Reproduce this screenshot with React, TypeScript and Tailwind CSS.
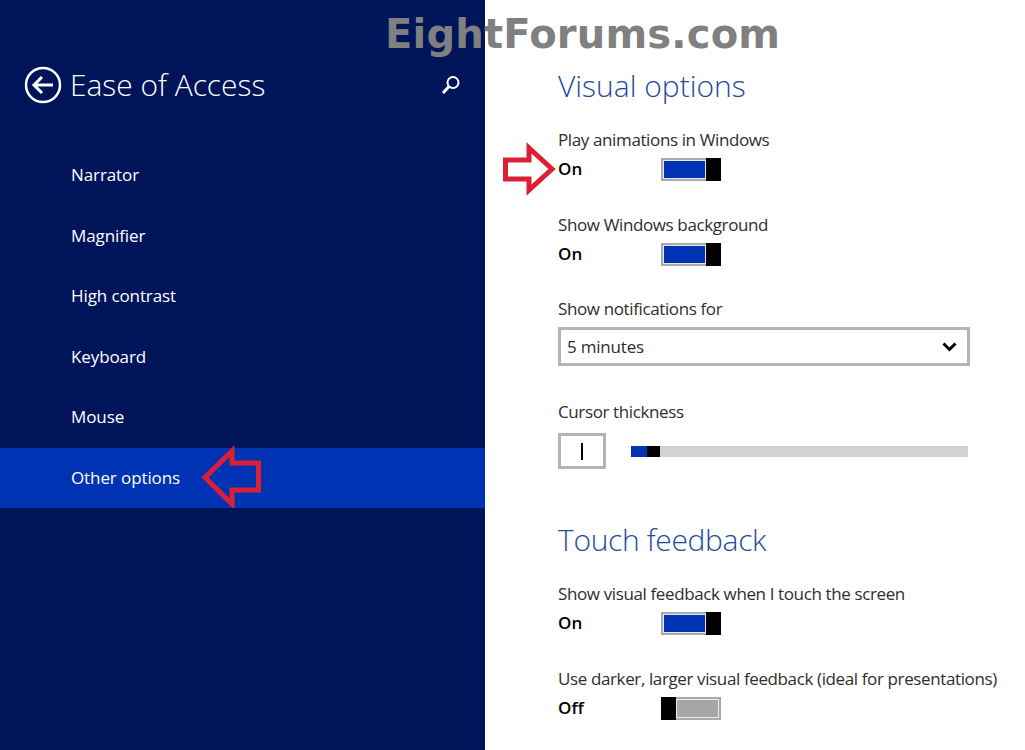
const font = { fontFamily: '"Open Sans", "Noto Sans", sans-serif' };

const navItems = ["Narrator", "Magnifier", "High contrast", "Keyboard", "Mouse", "Other options"];

function Toggle({ on }: { on: boolean }) {
  return (
    <div className="flex h-[23px] w-[60px] items-stretch border-2 border-[#a9a9a9]">
      {on ? (
        <>
          <div className="flex-1 border border-[#e4e8f2] bg-[#0033b4]" />
          <div className="-my-[2px] -mr-[2px] w-[15px] bg-black" />
        </>
      ) : (
        <>
          <div className="-my-[2px] -ml-[2px] w-[15px] bg-black" />
          <div className="flex-1 border border-[#eeeeee] bg-[#a6a6a6]" />
        </>
      )}
    </div>
  );
}

function ToggleRow({ label, on, className }: { label: string; on: boolean; className: string }) {
  return (
    <div className={className}>
      <p className="h-[26px] text-[17px] leading-[26px] tracking-[-0.38px] text-[#2e2e2e]">{label}</p>
      <div className="mt-[4px] flex h-[24px] items-center">
        <span className="w-[103px] text-[17px] font-semibold text-black">{on ? "On" : "Off"}</span>
        <Toggle on={on} />
      </div>
    </div>
  );
}

export default function App() {
  return (
    <div className="relative flex h-[750px] w-[1025px] overflow-hidden bg-white" style={font}>
      {/* Left nav */}
      <aside className="w-[485px] shrink-0 bg-[#00145a] text-white">
        <header className="flex h-[145px] items-center pl-[24px] pr-[24px] pt-[24px]">
          <svg width="38" height="38" viewBox="0 0 38 38" fill="none" stroke="white" strokeWidth="2.5">
            <circle cx="19" cy="19" r="17" />
            <path d="M10 19 H29 M18 11 L10 19 L18 27" strokeWidth="3" />
          </svg>
          <h1 className="ml-[8px] flex-1 text-[29.9px] font-light leading-none">Ease of Access</h1>
          <svg width="20" height="20" viewBox="0 0 20 20" fill="none" stroke="white" strokeWidth="2">
            <circle cx="12" cy="7.5" r="5.5" />
            <path d="M8 11.5 L2 18" strokeWidth="3" />
          </svg>
        </header>
        <nav>
          {navItems.map((item) => (
            <div
              key={item}
              className={`flex h-[60.5px] items-center pb-[1px] pl-[71px] text-[17px] tracking-[-0.1px] ${item === "Other options" ? "bg-[#0033b4]" : ""}`}
            >
              {item}
            </div>
          ))}
        </nav>
      </aside>

      {/* Settings pane */}
      <main className="flex-1 pl-[73px] pt-[65px]">
        <h2 className="h-[42px] text-[30px] font-light leading-[42px] text-[#1f4a9c]">Visual options</h2>
        <ToggleRow label="Play animations in Windows" on className="mt-[20px]" />
        <ToggleRow label="Show Windows background" on className="mt-[31px]" />
        <p className="mt-[30px] h-[26px] text-[17px] leading-[26px] tracking-[-0.38px] text-[#2e2e2e]">Show notifications for</p>
        <div className="mt-[5px] flex h-[39px] w-[412px] items-center justify-between border-[3px] border-[#b4b4b4] pl-[6px] pr-[10px] text-[17px] tracking-[-0.2px] text-[#2e2e2e]">
          <span>5 minutes</span>
          <svg width="15" height="10" viewBox="0 0 15 10" fill="none" stroke="black" strokeWidth="3">
            <path d="M1.5 1.5 L7.5 7.5 L13.5 1.5" />
          </svg>
        </div>
        <p className="mt-[33px] h-[26px] text-[17px] leading-[26px] tracking-[-0.38px] text-[#2e2e2e]">Cursor thickness</p>
        <div className="mt-[8px] flex items-center">
          <div className="flex h-[36px] w-[48px] items-center justify-center border-[3px] border-[#b4b4b4]">
            <div className="h-[17px] w-[2px] bg-black" />
          </div>
          <div className="ml-[25px] flex h-[11px] w-[337px] bg-[#d2d2d2]">
            <div className="w-[16px] bg-[#0033b4]" />
            <div className="w-[13px] bg-black" />
          </div>
        </div>
        <h2 className="mt-[50px] h-[42px] text-[30px] font-light leading-[42px] tracking-[-0.35px] text-[#1f4a9c]">Touch feedback</h2>
        <ToggleRow label="Show visual feedback when I touch the screen" on className="mt-[20px]" />
        <ToggleRow label="Use darker, larger visual feedback (ideal for presentations)" on={false} className="mt-[31px]" />
      </main>

      {/* Overlays: watermark and callout arrows */}
      <div
        className="absolute left-[385px] top-[9px] text-[40px] font-bold leading-[50px] tracking-[0.2px] text-[#808080]"
        style={{ fontFamily: '"DejaVu Sans", sans-serif' }}
      >
        EightForums.com
      </div>
      <svg className="absolute left-[499px] top-[139px]" width="62" height="62" viewBox="0 0 62 62" fill="none">
        <path d="M53 30 L30 9 L30 21 L6.5 21 L6.5 40 L30 40 L30 51 Z" stroke="#dc2033" strokeWidth="5" />
      </svg>
      <svg className="absolute left-[200px] top-[446px]" width="62" height="62" viewBox="0 0 62 62" fill="none">
        <path d="M5 31.5 L32 5 L32 17 L58.5 17 L58.5 44 L32 44 L32 58 Z" stroke="#dc2033" strokeWidth="5" />
      </svg>
    </div>
  );
}
